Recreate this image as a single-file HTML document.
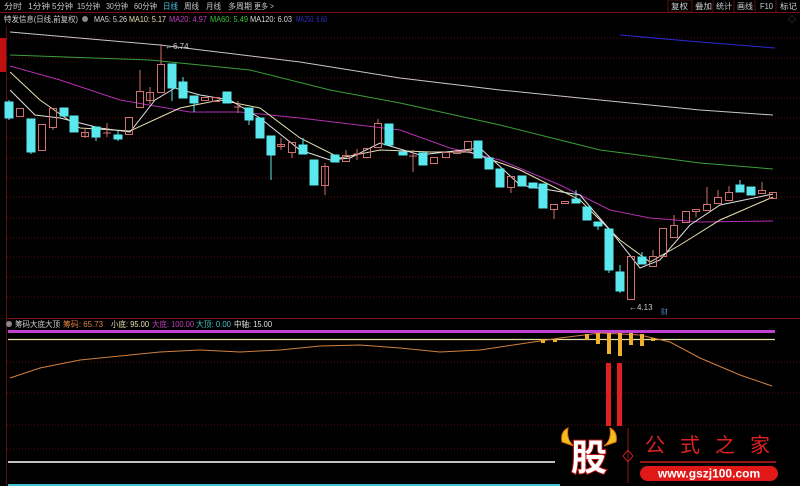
<!DOCTYPE html>
<html><head><meta charset="utf-8"><style>
html,body{margin:0;padding:0;background:#000;}
body{width:800px;height:486px;overflow:hidden;position:relative;font-family:"Liberation Sans","Noto Sans CJK SC",sans-serif;}
svg{position:absolute;left:0;top:0}
text{font-family:"Liberation Sans","Noto Sans CJK SC",sans-serif;}
</style></head><body>
<svg width="800" height="486" viewBox="0 0 800 486" xmlns="http://www.w3.org/2000/svg">
<rect width="800" height="486" fill="#000"/>
<g font-size="8" fill="#c8c8c8" lengthAdjust="spacingAndGlyphs">
<text x="4" y="9" textLength="18" lengthAdjust="spacingAndGlyphs">分时</text>
<text x="28" y="9" textLength="22" lengthAdjust="spacingAndGlyphs">1分钟</text>
<text x="52" y="9" textLength="21" lengthAdjust="spacingAndGlyphs">5分钟</text>
<text x="77" y="9" textLength="23" lengthAdjust="spacingAndGlyphs">15分钟</text>
<text x="106" y="9" textLength="22" lengthAdjust="spacingAndGlyphs">30分钟</text>
<text x="134" y="9" textLength="23" lengthAdjust="spacingAndGlyphs">60分钟</text>
<text x="163" y="9" fill="#4fc4e6" textLength="15" lengthAdjust="spacingAndGlyphs">日线</text>
<text x="184" y="9" textLength="15" lengthAdjust="spacingAndGlyphs">周线</text>
<text x="206" y="9" textLength="15" lengthAdjust="spacingAndGlyphs">月线</text>
<text x="228" y="9" textLength="24" lengthAdjust="spacingAndGlyphs">多周期</text>
<text x="254" y="9" textLength="20" lengthAdjust="spacingAndGlyphs">更多 &gt;</text>
</g>
<line x1="0" y1="12.5" x2="800" y2="12.5" stroke="#7a1010" stroke-width="1"/>
<g font-size="8" fill="#d0d0d0">
<rect x="668" y="0" width="24" height="12" fill="none" stroke="#5a1010"/>
<text x="671" y="9" textLength="17" lengthAdjust="spacingAndGlyphs">复权</text>
<text x="695" y="9" textLength="17" lengthAdjust="spacingAndGlyphs">叠加</text>
<text x="716" y="9" textLength="16" lengthAdjust="spacingAndGlyphs">统计</text>
<text x="737" y="9" textLength="16" lengthAdjust="spacingAndGlyphs">画线</text>
<text x="760" y="9" textLength="13" lengthAdjust="spacingAndGlyphs">F10</text>
<text x="780" y="9" textLength="17" lengthAdjust="spacingAndGlyphs">标记</text>
</g>
<g stroke="#5a1010"><line x1="692" y1="0" x2="692" y2="12"/><line x1="713" y1="0" x2="713" y2="12"/><line x1="734" y1="0" x2="734" y2="12"/><line x1="755" y1="0" x2="755" y2="12"/><line x1="776" y1="0" x2="776" y2="12"/></g>
<text x="788" y="22" font-size="8" fill="#666">◇</text>
<g font-size="8">
<text x="4" y="22" fill="#d0d0d0" textLength="74" lengthAdjust="spacingAndGlyphs">特发信息(日线,前复权)</text>
<circle cx="85" cy="19" r="3" fill="#888"/>
<text x="94" y="22" fill="#d8d8d8" textLength="33" lengthAdjust="spacingAndGlyphs">MA5: 5.26</text>
<text x="129" y="22" fill="#e8e0b0" textLength="37" lengthAdjust="spacingAndGlyphs">MA10: 5.17</text>
<text x="169" y="22" fill="#c040c0" textLength="38" lengthAdjust="spacingAndGlyphs">MA20: 4.97</text>
<text x="210" y="22" fill="#40c040" textLength="38" lengthAdjust="spacingAndGlyphs">MA60: 5.49</text>
<text x="250" y="22" fill="#d8d8d8" textLength="42" lengthAdjust="spacingAndGlyphs">MA120: 6.03</text>
<text x="296" y="22" fill="#3030c0" textLength="31" lengthAdjust="spacingAndGlyphs">MA250: 6.60</text>
</g>
<rect x="0" y="38" width="6" height="34" fill="#c01010"/>
<line x1="6.5" y1="26" x2="6.5" y2="486" stroke="#5a1010"/>
<g stroke="#5a1010" stroke-dasharray="1,2" stroke-width="1">
<line x1="7" y1="38" x2="800" y2="38"/><line x1="7" y1="58" x2="800" y2="58"/><line x1="7" y1="78" x2="800" y2="78"/><line x1="7" y1="98" x2="800" y2="98"/><line x1="7" y1="118" x2="800" y2="118"/><line x1="7" y1="138" x2="800" y2="138"/><line x1="7" y1="158" x2="800" y2="158"/><line x1="7" y1="178" x2="800" y2="178"/><line x1="7" y1="197" x2="800" y2="197"/><line x1="7" y1="218" x2="800" y2="218"/><line x1="7" y1="238" x2="800" y2="238"/><line x1="7" y1="257" x2="800" y2="257"/><line x1="7" y1="277" x2="800" y2="277"/><line x1="7" y1="297" x2="800" y2="297"/>
<line x1="7" y1="362" x2="800" y2="362"/><line x1="7" y1="393" x2="800" y2="393"/><line x1="7" y1="425" x2="800" y2="425"/><line x1="7" y1="449" x2="560" y2="449"/>
</g>
<line x1="7" y1="318.5" x2="800" y2="318.5" stroke="#7a1010"/>
<g fill="none" stroke-width="1">
<polyline stroke="#2a2ad0" points="620,35 700,42 775,48"/>
<polyline stroke="#c8c8c8" points="10,32 160,45 300,62 400,78 500,90 600,100 700,110 773,115"/>
<polyline stroke="#3aa03a" points="10,55 150,60 250,70 330,90 400,103 500,125 560,140 600,150 700,163 773,169"/>
<polyline stroke="#b030b0" points="10,66 60,80 120,100 190,112 240,112 300,118 400,130 450,148 500,160 560,185 610,210 650,218 700,222 773,221"/>
<polyline stroke="#e8e0b0" points="10,72 40,100 80,128 130,131 180,108 220,100 260,108 300,138 340,158 380,150 430,152 470,152 520,170 580,200 620,240 650,262 680,245 720,220 773,197"/>
<polyline stroke="#e0e0e0" points="10,90 35,115 60,118 100,128 130,132 155,100 175,88 200,95 230,100 260,118 300,150 330,160 350,158 380,143 420,155 480,148 520,185 580,195 610,230 640,268 660,260 690,225 720,205 773,194"/>
</g>
<g stroke-width="1">
<g fill="#5ae8ee" stroke="#5ae8ee">
<line x1="9" y1="100" x2="9" y2="120"/><rect x="5" y="102" width="8" height="16"/>
<rect x="27" y="119" width="8" height="33"/><line x1="31" y1="119" x2="31" y2="154"/>
<rect x="60" y="108" width="8" height="8"/>
<rect x="70" y="116" width="8" height="16"/>
<rect x="92" y="127" width="8" height="10"/><line x1="96" y1="137" x2="96" y2="141"/>
<rect x="114" y="135" width="8" height="4"/><line x1="118" y1="131" x2="118" y2="141"/>
<rect x="168" y="64" width="8" height="24"/><line x1="172" y1="88" x2="172" y2="101"/>
<rect x="179" y="82" width="8" height="16"/><line x1="183" y1="77" x2="183" y2="82"/>
<rect x="190" y="96" width="8" height="7"/><line x1="194" y1="103" x2="194" y2="112"/>
<rect x="223" y="92" width="8" height="11"/>
<rect x="245" y="108" width="8" height="12"/><line x1="249" y1="120" x2="249" y2="125"/>
<rect x="256" y="118" width="8" height="20"/>
<rect x="267" y="136" width="8" height="19"/><line x1="271" y1="155" x2="271" y2="180"/>
<rect x="299" y="145" width="8" height="9"/><line x1="303" y1="138" x2="303" y2="145"/>
<rect x="310" y="160" width="8" height="25"/>
<rect x="331" y="155" width="8" height="7"/>
<rect x="385" y="124" width="8" height="21"/>
<rect x="399" y="152" width="8" height="3"/>
<rect x="419" y="153" width="8" height="12"/>
<rect x="474" y="141" width="8" height="17"/>
<rect x="485" y="158" width="8" height="11"/>
<rect x="496" y="169" width="8" height="18"/>
<rect x="518" y="176" width="8" height="10"/>
<rect x="529" y="183" width="8" height="5"/>
<rect x="539" y="184" width="8" height="24"/>
<rect x="572" y="199" width="8" height="4"/><line x1="576" y1="190" x2="576" y2="203"/>
<rect x="583" y="207" width="8" height="13"/>
<rect x="594" y="222" width="8" height="4"/><line x1="598" y1="226" x2="598" y2="230"/>
<rect x="605" y="229" width="8" height="41"/><line x1="609" y1="270" x2="609" y2="273"/>
<rect x="616" y="272" width="8" height="19"/><line x1="620" y1="265" x2="620" y2="293"/>
<rect x="638" y="257" width="8" height="7"/><line x1="642" y1="252" x2="642" y2="257"/>
<rect x="736" y="185" width="8" height="7"/><line x1="740" y1="180" x2="740" y2="185"/>
<rect x="747" y="187" width="8" height="8"/>
</g>
<g fill="none" stroke="#d07070">
<rect x="16.5" y="108.5" width="7" height="8"/>
<rect x="38.5" y="124.5" width="7" height="26"/>
<rect x="49.5" y="108.5" width="7" height="19"/><line x1="53" y1="128" x2="53" y2="130"/>
<rect x="81.5" y="132.5" width="7" height="4"/><line x1="85" y1="128" x2="85" y2="138"/>
<line x1="103" y1="133" x2="111" y2="133"/><line x1="107" y1="123" x2="107" y2="137"/>
<rect x="125.5" y="117.5" width="7" height="17"/>
<rect x="136.5" y="91.5" width="7" height="16"/><line x1="140" y1="70" x2="140" y2="91"/>
<rect x="146.5" y="92.5" width="7" height="8"/><line x1="150" y1="87" x2="150" y2="104"/>
<rect x="157.5" y="64.5" width="7" height="28"/><line x1="161" y1="44" x2="161" y2="64"/>
<rect x="201.5" y="97.5" width="7" height="3"/>
<rect x="212.5" y="97.5" width="7" height="4"/>
<line x1="234" y1="107" x2="242" y2="107"/><line x1="238" y1="101" x2="238" y2="113"/>
<rect x="277.5" y="144.5" width="7" height="2"/><line x1="281" y1="138" x2="281" y2="150"/>
<rect x="288.5" y="142.5" width="7" height="10"/><line x1="292" y1="152" x2="292" y2="158"/>
<rect x="321.5" y="166.5" width="7" height="19"/><line x1="325" y1="163" x2="325" y2="195"/>
<rect x="342.5" y="155.5" width="7" height="6"/><line x1="346" y1="150" x2="346" y2="155"/>
<line x1="353" y1="154" x2="361" y2="154"/><line x1="357" y1="149" x2="357" y2="160"/>
<rect x="363.5" y="148.5" width="7" height="9"/>
<rect x="374.5" y="123.5" width="7" height="24"/><line x1="378" y1="119" x2="378" y2="123"/>
<line x1="409" y1="156" x2="417" y2="156"/><line x1="413" y1="150" x2="413" y2="172"/>
<rect x="430.5" y="157.5" width="7" height="6"/>
<rect x="442.5" y="152.5" width="7" height="5"/>
<rect x="453.5" y="151.5" width="7" height="2"/>
<rect x="464.5" y="141.5" width="7" height="9"/>
<rect x="507.5" y="176.5" width="7" height="11"/><line x1="511" y1="187" x2="511" y2="193"/>
<rect x="550.5" y="204.5" width="7" height="5"/><line x1="554" y1="209" x2="554" y2="219"/>
<rect x="561.5" y="201.5" width="7" height="2"/>
<rect x="627.5" y="256.5" width="7" height="43"/>
<rect x="649.5" y="256.5" width="7" height="10"/><line x1="653" y1="250" x2="653" y2="256"/>
<rect x="659.5" y="228.5" width="7" height="28"/>
<rect x="670.5" y="225.5" width="7" height="12"/><line x1="674" y1="215" x2="674" y2="225"/>
<rect x="682.5" y="211.5" width="7" height="11"/>
<rect x="692.5" y="209.5" width="7" height="2"/><line x1="696" y1="211" x2="696" y2="217"/>
<rect x="703.5" y="204.5" width="7" height="6"/><line x1="707" y1="187" x2="707" y2="204"/>
<rect x="714.5" y="197.5" width="7" height="6"/><line x1="718" y1="190" x2="718" y2="197"/>
<rect x="725.5" y="192.5" width="7" height="8"/><line x1="729" y1="186" x2="729" y2="192"/>
<rect x="758.5" y="190.5" width="7" height="3"/><line x1="762" y1="182" x2="762" y2="190"/>
<rect x="769.5" y="192.5" width="7" height="6"/>
</g>
</g>
<text x="165" y="49" font-size="8" fill="#c8c8c8">←6.74</text>
<text x="629" y="310" font-size="8" fill="#c8c8c8">←4.13</text>
<text x="661" y="314" font-size="7" fill="#6080c0">财</text>
<circle cx="9" cy="324" r="3" fill="#888"/>
<g font-size="8">
<text x="15" y="327" fill="#d0d0d0" textLength="45" lengthAdjust="spacingAndGlyphs">筹码大底大顶</text>
<text x="63" y="327" fill="#e08040" textLength="40" lengthAdjust="spacingAndGlyphs">筹码: 65.73</text>
<text x="111" y="327" fill="#e8e0b0" textLength="38" lengthAdjust="spacingAndGlyphs">小底: 95.00</text>
<text x="152" y="327" fill="#c040c0" textLength="42" lengthAdjust="spacingAndGlyphs">大底: 100.00</text>
<text x="196" y="327" fill="#40c0c0" textLength="35" lengthAdjust="spacingAndGlyphs">大顶: 0.00</text>
<text x="234" y="327" fill="#e0e0e0" textLength="38" lengthAdjust="spacingAndGlyphs">中轴: 15.00</text>
</g>
<rect x="8" y="330" width="767" height="3" fill="#c040d0"/>
<line x1="8" y1="339.5" x2="775" y2="339.5" stroke="#e8e0a0" stroke-width="1.3"/>
<polyline fill="none" stroke="#d08040" stroke-width="1" points="10,378 40,368 80,360 120,356 160,352 200,350 240,352 280,350 320,346 360,345 400,348 440,352 480,350 520,344 560,338 600,333 640,335 670,342 700,358 740,375 772,386"/>
<g fill="#f0b030">
<rect x="541" y="339" width="4" height="4"/><rect x="553" y="339" width="4" height="3"/><rect x="585" y="334" width="4" height="6"/><rect x="596" y="333" width="4" height="11"/><rect x="607" y="333" width="4" height="21"/><rect x="618" y="333" width="4" height="23"/><rect x="629" y="333" width="4" height="12"/><rect x="640" y="334" width="4" height="12"/><rect x="651" y="338" width="4" height="3"/>
</g>
<rect x="606" y="363" width="5" height="63" fill="#e02020"/>
<rect x="617" y="363" width="5" height="63" fill="#e02020"/>
<line x1="8" y1="462" x2="555" y2="462" stroke="#ffffff" stroke-width="1.5"/>
<line x1="8" y1="485" x2="560" y2="485" stroke="#40c0d0" stroke-width="2"/>
<path d="M562,442 Q560,432 568,428 Q566,440 574,446 Z" fill="#f0c020" stroke="#e07010"/>
<path d="M616,442 Q618,432 610,428 Q612,440 604,446 Z" fill="#f0c020" stroke="#e07010"/>
<text x="589" y="470" font-size="36" font-weight="bold" text-anchor="middle" fill="#fff" stroke="#c01010" stroke-width="2" paint-order="stroke" font-family="Noto Sans CJK SC, sans-serif">股</text>
<line x1="628" y1="428" x2="628" y2="483" stroke="#802020"/>
<path d="M628,450 L633,456 L628,462 L623,456 Z" fill="none" stroke="#c02020"/>
<text x="645" y="452" font-size="20" fill="#e02020" textLength="125" lengthAdjust="spacing" font-family="Noto Serif CJK SC, serif">公式之家</text>
<line x1="640" y1="462" x2="776" y2="462" stroke="#c02020" stroke-width="1.5"/>
<rect x="640" y="466" width="138" height="15" rx="7.5" fill="#e01818"/>
<text x="709" y="477.5" font-size="12" font-weight="bold" text-anchor="middle" fill="#fff">www.gszj100.com</text>
</svg>
</body></html>
